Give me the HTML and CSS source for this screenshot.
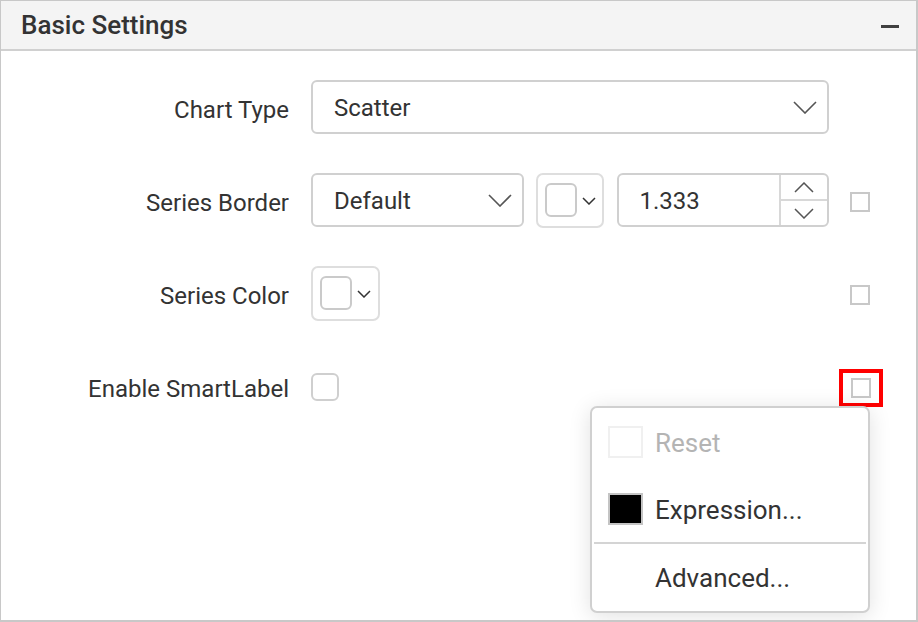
FILE: index.html
```html
<!DOCTYPE html>
<html>
<head>
<meta charset="utf-8">
<link rel="stylesheet" href="styles.css">
</head>
<body>
<div class="panel">
  <div class="panel-header">
    <span class="panel-title">Basic Settings</span>
    <span class="collapse-icon"></span>
  </div>
  <div class="panel-body">
    <div class="row">
      <div class="label">Chart Type</div>
      <div class="controls">
        <div class="dropdown wide">
          <span class="dd-text">Scatter</span>
          <svg class="chev" width="24" height="13" viewBox="0 0 24 13"><path d="M1 1 L12 12 L23 1" fill="none" stroke="#555" stroke-width="1.6"/></svg>
        </div>
      </div>
      <div class="spacer"></div>
    </div>
    <div class="row">
      <div class="label">Series Border</div>
      <div class="controls">
        <div class="dropdown mid">
          <span class="dd-text">Default</span>
          <svg class="chev" width="24" height="13" viewBox="0 0 24 13"><path d="M1 1 L12 12 L23 1" fill="none" stroke="#555" stroke-width="1.6"/></svg>
        </div>
        <div class="colorpick">
          <span class="swatch"></span>
          <svg class="mini-chev" width="14" height="8" viewBox="0 0 14 8"><path d="M1 1 L7 7 L13 1" fill="none" stroke="#333" stroke-width="1.5"/></svg>
        </div>
        <div class="numeric">
          <span class="num-text">1.333</span>
          <div class="spin">
            <div class="spin-btn"><svg width="20" height="11" viewBox="0 0 20 11"><path d="M1 10 L10 1 L19 10" fill="none" stroke="#555" stroke-width="1.5"/></svg></div>
            <div class="spin-btn"><svg width="20" height="11" viewBox="0 0 20 11"><path d="M1 1 L10 10 L19 1" fill="none" stroke="#555" stroke-width="1.5"/></svg></div>
          </div>
        </div>
      </div>
      <div class="spacer"><span class="small-check shifted"></span></div>
    </div>
    <div class="row">
      <div class="label">Series Color</div>
      <div class="controls">
        <div class="colorpick">
          <span class="swatch"></span>
          <svg class="mini-chev" width="14" height="8" viewBox="0 0 14 8"><path d="M1 1 L7 7 L13 1" fill="none" stroke="#333" stroke-width="1.5"/></svg>
        </div>
      </div>
      <div class="spacer"><span class="small-check shifted"></span></div>
    </div>
    <div class="row last">
      <div class="label">Enable SmartLabel</div>
      <div class="controls">
        <span class="round-check"></span>
      </div>
      <div class="spacer">
        <span class="highlight"><span class="small-check"></span></span>
      </div>
    </div>
    <div class="menu">
      <div class="menu-item disabled"><span class="menu-icon faint"></span><span>Reset</span></div>
      <div class="menu-item"><span class="menu-icon black"></span><span>Expression...</span></div>
      <div class="menu-sep"></div>
      <div class="menu-item"><span class="menu-icon none"></span><span>Advanced...</span></div>
    </div>
  </div>
</div>
</body>
</html>
```

FILE: styles.css
```css
* { box-sizing: border-box; }
html, body { margin: 0; padding: 0; background: #fff; }
body { font-family: Roboto, "Liberation Sans", sans-serif; color: #333; }

.panel {
  width: 918px;
  height: 622px;
  border: 1px solid #c8c8c8;
  border-right-width: 2px;
  border-bottom-width: 2px;
  position: relative;
  overflow: hidden;
}

.panel-header {
  height: 50px;
  background: #f4f4f4;
  border-bottom: 2px solid #d0d0d0;
  display: flex;
  align-items: center;
  justify-content: space-between;
  padding: 0 17px 0 20px;
}
.panel-title {
  font-size: 26px;
  font-weight: 500;
  color: #333;
}
.collapse-icon {
  width: 18px;
  height: 3px;
  background: #404040;
  margin-top: 2px;
}

.panel-body {
  position: relative;
  padding-top: 29px;
  height: 570px;
}

.row {
  display: flex;
  align-items: center;
  height: 54px;
  margin-bottom: 39px;
}
.row.last { margin-top: 2px; }
.label {
  width: 288px;
  text-align: right;
  font-size: 24px;
  color: #333;
  margin-top: 5px;
}
.controls {
  width: 518px;
  margin-left: 22px;
  display: flex;
  align-items: center;
  gap: 12px;
}
.spacer {
  margin-left: 20px;
  width: 22px;
  display: flex;
  align-items: center;
  justify-content: center;
  position: relative;
}

.dropdown {
  height: 54px;
  border: 2px solid #d0d0d0;
  border-radius: 6px;
  display: flex;
  align-items: center;
  justify-content: space-between;
  padding: 0 10px 0 21px;
  font-size: 24px;
  color: #333;
}
.dd-text { margin-top: 1px; }
.dropdown.wide { width: 518px; height: 54px; }
.dropdown.mid { width: 213px; }

.colorpick {
  width: 69px;
  height: 55px;
  border: 2px solid #dedede;
  border-radius: 7px;
  display: flex;
  align-items: center;
  padding-left: 7px;
  gap: 5px;
}
.swatch {
  width: 32px;
  height: 34px;
  border: 2px solid #cacaca;
  border-radius: 6px;
}
.mini-chev { margin-top: 2px; }

.numeric {
  width: 212px;
  height: 54px;
  margin-left: 1px;
  border: 2px solid #d0d0d0;
  border-radius: 6px;
  display: flex;
  align-items: center;
  justify-content: space-between;
  overflow: hidden;
}
.num-text {
  padding-left: 20px;
  font-size: 24px;
  color: #333;
  margin-top: 1px;
}
.spin {
  width: 48px;
  height: 100%;
  border-left: 2px solid #d8d8d8;
  display: flex;
  flex-direction: column;
}
.spin-btn {
  flex: 1;
  display: flex;
  align-items: center;
  justify-content: center;
}
.spin-btn + .spin-btn { border-top: 2px solid #d8d8d8; }

.small-check {
  width: 20px;
  height: 20px;
  border: 2px solid #c8c8c8;
  display: block;
  background: #fff;
}
.small-check.shifted { margin-top: 3px; }
.round-check {
  width: 28px;
  height: 28px;
  border: 2px solid #cfcfcf;
  border-radius: 6px;
  margin-top: 2px;
}

.highlight {
  position: absolute;
  left: -10px;
  top: -17px;
  width: 44px;
  height: 38px;
  border: 4px solid #ff0000;
  display: flex;
  align-items: center;
  justify-content: center;
}

.menu {
  position: absolute;
  left: 589px;
  top: 355px;
  width: 280px;
  height: 207px;
  background: #fff;
  border: 2px solid #d0d0d0;
  border-radius: 7px;
  box-shadow: 0 3px 22px rgba(0,0,0,0.12);
  padding: 17px 2px 0 2px;
}
.menu-item {
  display: flex;
  align-items: center;
  height: 34px;
  padding-left: 14px;
  font-size: 26px;
  color: #333;
  margin-bottom: 33px;
}
.menu-item span:last-child { margin-top: 2px; }
.menu-item.disabled { color: #b4b4b4; }
.menu-icon {
  width: 35px;
  height: 32px;
  margin-right: 12px;
  display: inline-block;
}
.menu-icon.faint { border: 2px solid #f0f0f0; }
.menu-icon.black { background: #000; border: 2px solid #c4c4c4; }
.menu-sep {
  height: 2px;
  background: #d4d4d4;
  margin-top: -17px;
  margin-bottom: 16px;
}
```
